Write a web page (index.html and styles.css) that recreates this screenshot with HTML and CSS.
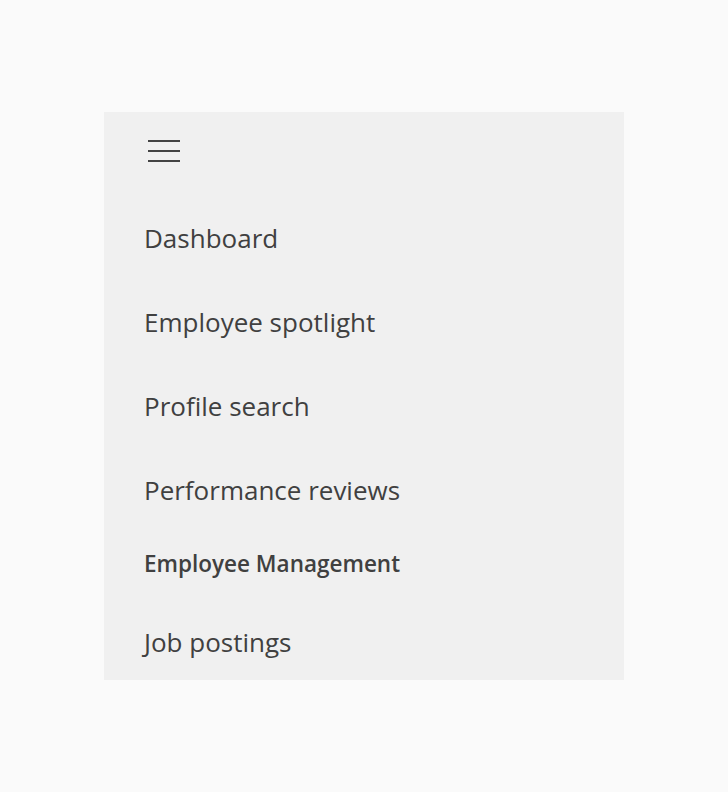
FILE: index.html
```html
<!DOCTYPE html>
<html lang="en">
<head>
<meta charset="utf-8">
<title>Nav</title>
<link rel="stylesheet" href="styles.css">
</head>
<body>
<nav class="nav">
  <div class="nav-header">
    <button class="menu-btn" aria-label="Menu">
      <svg width="32" height="22" viewBox="0 0 32 22" aria-hidden="true">
        <rect x="0" y="0" width="32" height="2" fill="#444"/>
        <rect x="0" y="10" width="32" height="2" fill="#444"/>
        <rect x="0" y="20" width="32" height="2" fill="#444"/>
      </svg>
    </button>
  </div>
  <ul class="nav-list">
    <li class="nav-link">Dashboard</li>
    <li class="nav-link">Employee spotlight</li>
    <li class="nav-link">Profile search</li>
    <li class="nav-link">Performance reviews</li>
    <li class="nav-group">Employee Management</li>
    <li class="nav-link">Job postings</li>
  </ul>
</nav>
</body>
</html>
```

FILE: styles.css
```css
html, body {
  margin: 0;
  padding: 0;
  background: #fafafa;
}
body {
  padding: 112px 104px 0 104px;
  font-family: "Open Sans", "Noto Sans", sans-serif;
  color: #404040;
}
.nav {
  width: 520px;
  height: 568px;
  background: #f0f0f0;
  overflow: hidden;
}
.nav-header {
  height: 84px;
  padding-left: 44px;
  box-sizing: border-box;
  padding-top: 28px;
}
.menu-btn {
  display: block;
  border: 0;
  background: none;
  padding: 0;
  margin: 0;
  width: 32px;
  height: 22px;
}
.menu-btn svg {
  display: block;
}
.nav-list {
  list-style: none;
  margin: 0;
  padding: 0;
}
.nav-link {
  height: 84px;
  line-height: 84px;
  padding-left: 40px;
  font-size: 26px;
  white-space: nowrap;
}
.nav-group {
  height: 68px;
  box-sizing: border-box;
  line-height: 63px;
  padding-left: 40px;
  padding-bottom: 5px;
  font-size: 22.5px;
  font-weight: 600;
  white-space: nowrap;
}
```
